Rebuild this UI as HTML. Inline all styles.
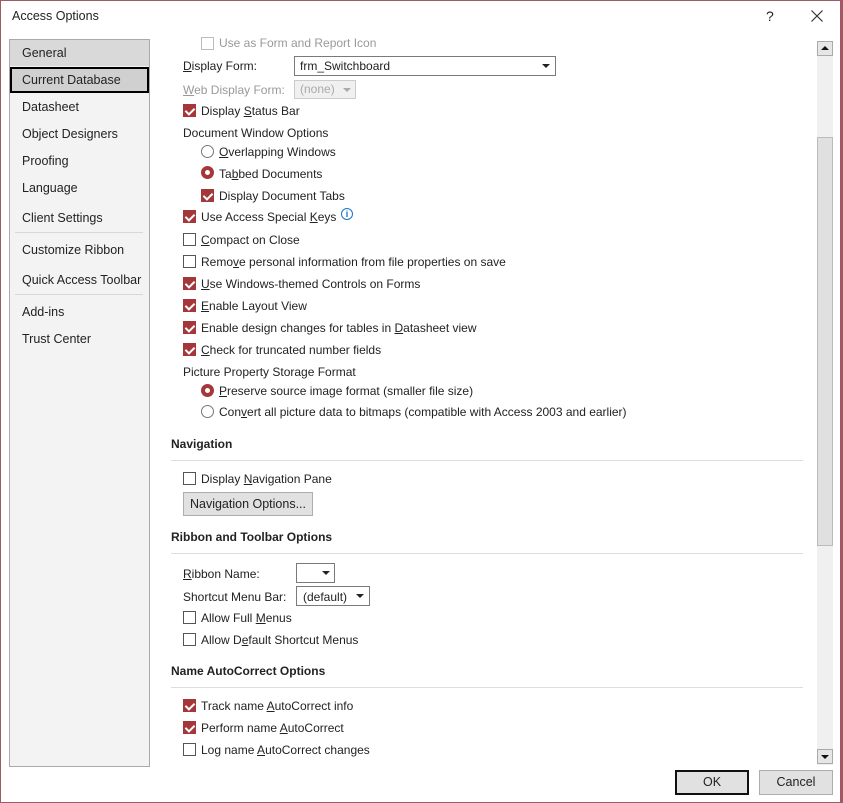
<!DOCTYPE html>
<html><head><meta charset="utf-8"><style>
*{margin:0;padding:0;box-sizing:border-box}
body{width:843px;height:803px;background:#fff;font-family:"Liberation Sans",sans-serif;font-size:12px;color:#222;position:relative;overflow:hidden}
.frame{position:absolute;inset:0;border:1px solid #a05a64;border-right:3px solid #a05a64}
.a{position:absolute;white-space:nowrap;line-height:16px}
.cb{position:absolute;width:13px;height:13px;border:1px solid #555;background:#fff}
.cb.on{background:#a4373a;border-color:#a4373a}
.cb.on::after{content:"";position:absolute;left:3px;top:1px;width:4px;height:7px;border:solid #fff;border-width:0 2px 2px 0;transform:rotate(45deg)}
.rd{position:absolute;width:13px;height:13px;border-radius:50%;border:1px solid #777;background:#fff}
.rd.on{border:4px solid #a4373a}
u{text-decoration:underline}
.nav{position:absolute;left:9px;top:39px;width:141px;height:728px;background:#f3f3f3;border:1px solid #aaa}
.ni{position:absolute;left:12px;font-size:12.5px;color:#222}
.sep{position:absolute;left:5px;width:128px;height:1px;background:#d8d8d8}
.hd{position:absolute;left:171px;font-weight:bold;font-size:12px}
.hl{position:absolute;left:171px;width:632px;height:1px;background:#ddd}
.sel{position:absolute;border:1px solid #7a7a7a;background:#fff}
.arr{position:absolute;width:0;height:0;border-left:4px solid transparent;border-right:4px solid transparent;border-top:4px solid #222}
.btn{position:absolute;background:#e1e1e1;border:1px solid #adadad;text-align:center;font-size:12.5px}
</style></head><body>
<div class="frame"></div>
<div class="a" style="left:12px;top:8px;font-size:12.5px">Access Options</div>
<div class="a" style="left:766px;top:8px;font-size:14px">?</div>
<svg style="position:absolute;left:811px;top:10px" width="12" height="12"><path d="M0.5 0.5L11.5 11.5M11.5 0.5L0.5 11.5" stroke="#333" stroke-width="1.2"/></svg>

<div class="nav">
<div style="position:absolute;left:0;top:0;width:139px;height:26px;background:#d9d9d9"></div>
<div class="ni" style="top:6px">General</div>
<div style="position:absolute;left:0;top:27px;width:139px;height:26px;background:#d0d0d0;border:2px solid #000"></div>
<div class="ni" style="top:33px">Current Database</div>
<div class="ni" style="top:60px">Datasheet</div>
<div class="ni" style="top:87px">Object Designers</div>
<div class="ni" style="top:114px">Proofing</div>
<div class="ni" style="top:141px">Language</div>
<div class="ni" style="top:171px">Client Settings</div>
<div class="sep" style="top:192px"></div>
<div class="ni" style="top:203px">Customize Ribbon</div>
<div class="ni" style="top:233px">Quick Access Toolbar</div>
<div class="sep" style="top:254px"></div>
<div class="ni" style="top:265px">Add-ins</div>
<div class="ni" style="top:292px">Trust Center</div>
</div>

<div class="cb" style="left:201px;top:37px;border-color:#bbb"></div>
<div class="a" style="left:219px;top:35px;color:#999">Use as Form and Report Icon</div>
<div class="a" style="left:183px;top:58px"><u>D</u>isplay Form:</div>
<div class="sel" style="left:294px;top:56px;width:262px;height:20px"></div>
<div class="a" style="left:300px;top:58px">frm_Switchboard</div>
<div class="arr" style="left:542px;top:64px"></div>
<div class="a" style="left:183px;top:82px;color:#999"><u>W</u>eb Display Form:</div>
<div class="sel" style="left:294px;top:80px;width:62px;height:19px;background:#f0f0f0;border-color:#ccc"></div>
<div class="a" style="left:300px;top:81px;color:#aaa">(none)</div>
<div class="arr" style="left:343px;top:88px;border-top-color:#aaa"></div>
<div class="cb on" style="left:183px;top:104px"></div><div class="a" style="left:201px;top:103px">Display <u>S</u>tatus Bar</div>
<div class="a" style="left:183px;top:125px">Document Window Options</div>
<div class="rd" style="left:201px;top:145px"></div><div class="a" style="left:219px;top:144px"><u>O</u>verlapping Windows</div>
<div class="rd on" style="left:201px;top:166px"></div><div class="a" style="left:219px;top:166px">Ta<u>b</u>bed Documents</div>
<div class="cb on" style="left:201px;top:189px"></div><div class="a" style="left:219px;top:188px">Display Document Tabs</div>
<div class="cb on" style="left:183px;top:210px"></div><div class="a" style="left:201px;top:209px">Use Access Special <u>K</u>eys</div>
<div style="position:absolute;left:341px;top:208px;width:12px;height:12px;border:1px solid #1a73c8;border-radius:50%;color:#1a73c8;font-size:9px;line-height:10px;text-align:center;font-weight:bold">i</div>
<div class="cb" style="left:183px;top:233px"></div><div class="a" style="left:201px;top:232px"><u>C</u>ompact on Close</div>
<div class="cb" style="left:183px;top:255px"></div><div class="a" style="left:201px;top:254px">Remo<u>v</u>e personal information from file properties on save</div>
<div class="cb on" style="left:183px;top:277px"></div><div class="a" style="left:201px;top:276px"><u>U</u>se Windows-themed Controls on Forms</div>
<div class="cb on" style="left:183px;top:299px"></div><div class="a" style="left:201px;top:298px"><u>E</u>nable Layout View</div>
<div class="cb on" style="left:183px;top:321px"></div><div class="a" style="left:201px;top:320px">Enable design changes for tables in <u>D</u>atasheet view</div>
<div class="cb on" style="left:183px;top:343px"></div><div class="a" style="left:201px;top:342px"><u>C</u>heck for truncated number fields</div>
<div class="a" style="left:183px;top:364px">Picture Property Storage Format</div>
<div class="rd on" style="left:201px;top:384px"></div><div class="a" style="left:219px;top:383px"><u>P</u>reserve source image format (smaller file size)</div>
<div class="rd" style="left:201px;top:405px"></div><div class="a" style="left:219px;top:404px">Con<u>v</u>ert all picture data to bitmaps (compatible with Access 2003 and earlier)</div>

<div class="hd" style="top:437px">Navigation</div>
<div class="hl" style="top:460px"></div>
<div class="cb" style="left:183px;top:472px"></div><div class="a" style="left:201px;top:471px">Display <u>N</u>avigation Pane</div>
<div class="btn" style="left:183px;top:492px;width:130px;height:24px;line-height:22px">Navigation Options...</div>

<div class="hd" style="top:530px">Ribbon and Toolbar Options</div>
<div class="hl" style="top:553px"></div>
<div class="a" style="left:183px;top:566px"><u>R</u>ibbon Name:</div>
<div class="sel" style="left:296px;top:563px;width:39px;height:20px"></div>
<div class="arr" style="left:322px;top:571px"></div>
<div class="a" style="left:183px;top:589px">Shortcut Menu Bar:</div>
<div class="sel" style="left:296px;top:586px;width:74px;height:20px"></div>
<div class="a" style="left:303px;top:589px">(default)</div>
<div class="arr" style="left:356px;top:594px"></div>
<div class="cb" style="left:183px;top:611px"></div><div class="a" style="left:201px;top:610px">Allow Full <u>M</u>enus</div>
<div class="cb" style="left:183px;top:633px"></div><div class="a" style="left:201px;top:632px">Allow D<u>e</u>fault Shortcut Menus</div>

<div class="hd" style="top:664px">Name AutoCorrect Options</div>
<div class="hl" style="top:687px"></div>
<div class="cb on" style="left:183px;top:699px"></div><div class="a" style="left:201px;top:698px">Track name <u>A</u>utoCorrect info</div>
<div class="cb on" style="left:183px;top:721px"></div><div class="a" style="left:201px;top:720px">Perform name <u>A</u>utoCorrect</div>
<div class="cb" style="left:183px;top:743px"></div><div class="a" style="left:201px;top:742px">Log name <u>A</u>utoCorrect changes</div>

<div style="position:absolute;left:817px;top:41px;width:16px;height:724px;background:#f0f0f0"></div>
<div style="position:absolute;left:817px;top:41px;width:16px;height:15px;background:#e6e6e6;border:1px solid #aaa"></div>
<div style="position:absolute;left:821px;top:46px;border-left:4px solid transparent;border-right:4px solid transparent;border-bottom:4px solid #111"></div>
<div style="position:absolute;left:817px;top:137px;width:16px;height:409px;background:#e0e0e0;border:1px solid #bbb"></div>
<div style="position:absolute;left:817px;top:749px;width:16px;height:15px;background:#e6e6e6;border:1px solid #aaa"></div>
<div style="position:absolute;left:821px;top:755px;border-left:4px solid transparent;border-right:4px solid transparent;border-top:4px solid #111"></div>

<div class="btn" style="left:675px;top:770px;width:74px;height:25px;line-height:21px;border:2px solid #111">OK</div>
<div class="btn" style="left:759px;top:770px;width:74px;height:25px;line-height:23px">Cancel</div>
</body></html>
